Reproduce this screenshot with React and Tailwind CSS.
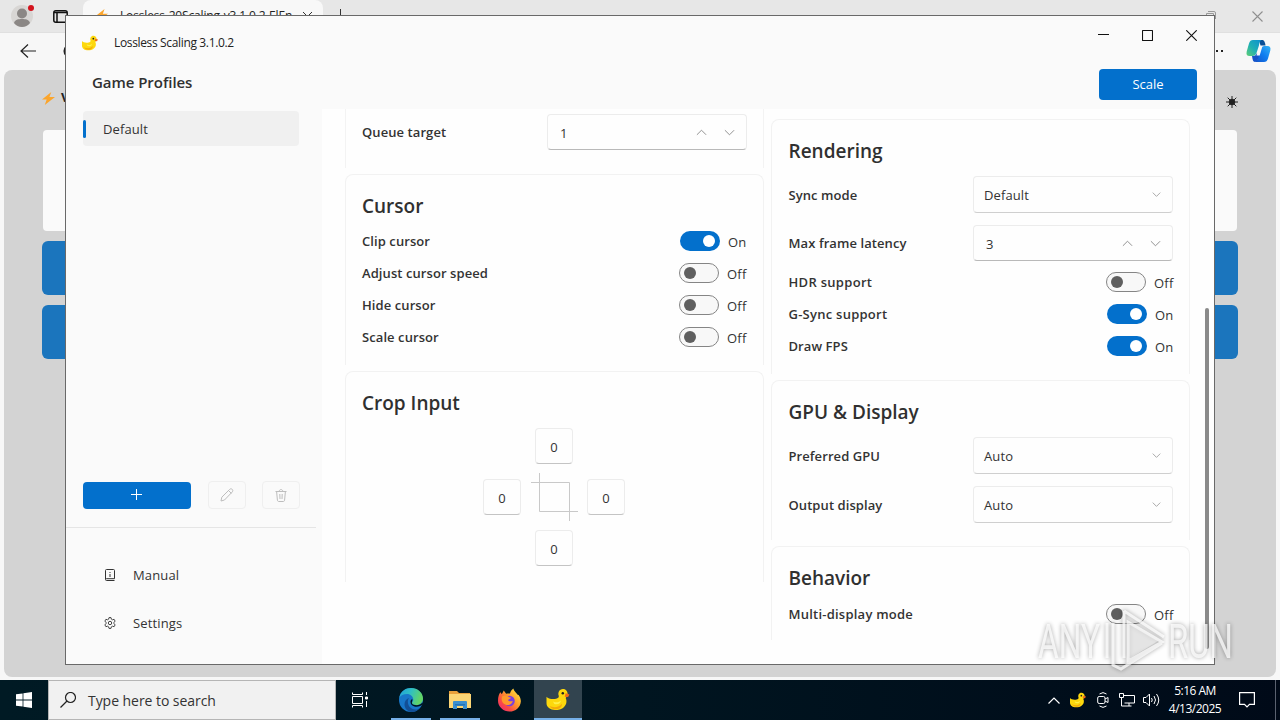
import { useState } from "react";

const Duck = ({ className }) => (
  <svg className={className} viewBox="0 0 24 24">
    <path fill="#fdd80d" d="M0 9c1.500 2 6 3.200 10 2.200 2-.4 3.200-1.200 2.800-3C11.500 5 13.500 1 17 1c3 0 5 2.200 5 5 0 2-1 3.200-2 4.400 1.500 2.600 1 7-1.500 9.100C16 22.600 12 23 9 23c-5 0-9-3-9-7z" />
    <path fill="#f5a90a" d="M3 18.500c4 2.500 10 2 13-2 .5 3-2 5.500-6 5.700-3 .1-6-1.200-7-3.700z" />
    <path fill="#fff04a" d="M7 14c3 1.500 6 1 8-1 0 2.500-2 4-4.500 4S7.500 16 7 14z" />
    <path fill="#f26a1b" d="M20 5.500l4 1.200-1.500 2.800-3.500-.5z" />
    <circle cx="17" cy="5.500" r="1.300" fill="#222" />
  </svg>
);

const Chevron = ({ up, className }) => (
  <svg className={className} viewBox="0 0 12 12" fill="none" stroke="currentColor">
    <path d={up ? "M1 8.500l5-5 5 5" : "M1 3.500l5 5 5-5"} />
  </svg>
);

const Card = ({ title, className, children }) => (
  <section className={`rounded-t-lg border-x border-t border-[#f2f2f2] px-4 pt-[15px] ${className}`}>
    <h2 className="h-8 text-[19px] font-semibold leading-8 text-[#303030]">{title}</h2>
    {children}
  </section>
);

const Label = ({ children, className = "tracking-[0.08px]" }) => (
  <span className={`text-[13px] font-semibold leading-5 text-[#333] ${className}`}>{children}</span>
);

const ToggleRow = ({ label, initial = false, labelClass }) => {
  const [on, setOn] = useState(initial);

  return (
    <div className="flex h-8 items-center justify-between">
      <Label className={labelClass}>{label}</Label>
      <button onClick={() => setOn(!on)} className={on ? "-mr-px flex items-center" : "flex items-center"}>
        <span
          className={`flex h-5 w-10 items-center rounded-full ${
            on ? "justify-end bg-[#0370cc] pr-[5px]" : "border border-[#858585] bg-[#f8f8f8] pl-[4px]"
          }`}
        >
          <span className={on ? "h-3 w-3 rounded-full bg-white" : "h-3 w-3 rounded-full bg-[#5f5f5f]"} />
        </span>
        <span className="ml-2 mt-px w-5 whitespace-nowrap text-left text-[13px] leading-5 tracking-[0.2px] text-[#333]">
          {on ? "On" : "Off"}
        </span>
      </button>
    </div>
  );
};

const SelectRow = ({ label, value }) => (
  <div className="flex h-[37px] items-center justify-between">
    <Label>{label}</Label>
    <button className="-mr-px ml-px flex h-[37px] w-[200px] items-center justify-between rounded border border-[#ececec] border-b-[#cfcfcf] bg-[#fefefe] pl-2.5 pr-[11px] text-[13px] tracking-[0.1px] text-[#333]">
      <span className="mt-0.5">{value}</span>
      <Chevron className="h-[9px] w-[9px] text-[#8d8d8d]" />
    </button>
  </div>
);

const NumberRow = ({ label, value, className = "" }) => (
  <div className="flex h-9 items-center justify-between">
    <Label>{label}</Label>
    <div
      className={`flex h-9 w-[200px] items-center rounded border border-[#ececec] border-b-[#b9b9b9] bg-[#fefefe] pl-3 pr-[11px] text-[13px] text-[#333] ${className}`}
    >
      <span className="mt-[3px] flex-1">{value}</span>
      <Chevron up className="h-[11px] w-[11px] text-[#888]" />
      <Chevron className="ml-[17px] h-[11px] w-[11px] text-[#888]" />
    </div>
  </div>
);

const CropBox = ({ className = "" }) => (
  <div
    className={`flex h-9 w-[38px] items-center justify-center rounded border border-[#ececec] border-b-[#c4c4c4] bg-[#fefefe] pt-[3px] text-[13px] text-[#333] ${className}`}
  >
    0
  </div>
);

const Bolt = ({ className }) => (
  <svg className={className} viewBox="0 0 14 14">
    <path fill="#fba52c" d="M10 0L0 8h5L3 14 14 5.500H8z" />
  </svg>
);

const Browser = () => (
  <div className="flex h-[680px] flex-col bg-[#f7f7f7]">
    <div className="flex h-8 shrink-0 bg-[#e7e7e7]">
      <div className="ml-[11px] mt-[5px] h-[22px] w-[22px]">
        <svg className="h-[26px] w-[26px] overflow-visible" viewBox="0 0 26 26">
          <circle cx="11" cy="11" r="11" fill="#d8d6d4" />
          <circle cx="11" cy="8.500" r="5" fill="#8b8785" />
          <path fill="#8b8785" d="M3 18c1-3.500 4-4 8-4s7 .5 8 4c-2 2.500-5 4-8 4s-6-1.500-8-4z" />
          <circle cx="20" cy="3" r="3" fill="#d3131d" />
        </svg>
      </div>
      <svg className="ml-5 mt-[10px] h-[13px] w-[15px]" viewBox="0 0 15 13" fill="none" stroke="#111" strokeWidth="1.500">
        <rect x=".8" y=".8" width="13.400" height="11.400" rx="2" />
        <path d="M1 2.500h13M4 3v9" strokeWidth="1.500" />
      </svg>
      <div className="ml-[15px] flex h-8 w-[240px] rounded-t-lg bg-[#f8f8f8] pl-[13px]">
        <Bolt className="mt-[9px] h-[12px] w-[12px]" />
        <span className="ml-[12px] mt-[7px] w-[175px] overflow-hidden whitespace-nowrap text-[12px] leading-[18px] tracking-[-0.15px] text-[#222]">
          Lossless-20Scaling-v3.1.0.2-ElEn
        </span>
        <svg className="ml-2 mt-3 h-[9px] w-[9px]" viewBox="0 0 9 9" stroke="#333">
          <path d="M0 0l9 9M9 0L0 9" />
        </svg>
      </div>
      <svg className="ml-[11px] mt-[9px] h-3 w-3" viewBox="0 0 12 12" stroke="#333">
        <path d="M6.500 0v12M0 6.500h12" />
      </svg>
      <div className="flex-1" />
      <svg className="mr-[36px] mt-[11px] h-[10px] w-[10px]" viewBox="0 0 10 10" fill="none" stroke="#999">
        <path d="M.5 2.500h7v7h-7zM2 .5h6q1.500 0 1.500 1.500v6" />
      </svg>
      <svg className="mr-[17px] mt-[11px] h-[11px] w-[11px]" viewBox="0 0 11 11" stroke="#8f8f8f" strokeWidth="1.100">
        <path d="M.5.5l10 10M10.500.5l-10 10" />
      </svg>
    </div>
    <div className="flex h-[38px] shrink-0 items-center border-t border-[#e0e0e0] pb-[2px] pl-5 pr-[9px]">
      <svg className="h-[14px] w-4" viewBox="0 0 16 14" fill="none" stroke="#222" strokeWidth="1.200">
        <path d="M8 .5L1 7l7 6.500M1 7h15" />
      </svg>
      <svg className="ml-[27px] h-[14px] w-[14px]" viewBox="0 0 14 14" fill="none" stroke="#222" strokeWidth="1.500">
        <circle cx="7" cy="7" r="5.800" />
      </svg>
      <div className="flex-1" />
      <span className="mr-[23px] flex gap-[3px]">
        <i className="h-0.5 w-0.5 bg-[#222]" />
        <i className="h-0.5 w-0.5 bg-[#222]" />
        <i className="h-0.5 w-0.5 bg-[#222]" />
      </span>
      <svg className="h-6 w-[25px]" viewBox="0 0 25 24">
        <defs>
          <linearGradient id="cpLeft" x1="1" y1="0" x2="0" y2="1">
            <stop offset="0" stopColor="#0d8fd0" />
            <stop offset=".55" stopColor="#1fb0b4" />
            <stop offset="1" stopColor="#5fce74" />
          </linearGradient>
          <linearGradient id="cpRight" x1="1" y1="0" x2="0" y2="1">
            <stop offset="0" stopColor="#35b4f5" />
            <stop offset=".5" stopColor="#0f7df0" />
            <stop offset="1" stopColor="#1553c9" />
          </linearGradient>
        </defs>
        <path fill="#0a4f96" d="M13 1h3c2 0 2.800 1.500 3.500 5.500h-5z" />
        <path fill="url(#cpLeft)" d="M7 1h8.500c-2 1-2 3-2.700 6L10.500 14c-.7 2-2 3-4 3H3.500C1 17 0 15.500.7 12.500L3 4.500C3.700 2 5 1 7 1z" />
        <path fill="url(#cpRight)" d="M18 23h-9c2-1 2.500-3 3.200-6L14.500 10c.7-2 2-3 4-3h3c2.500 0 3.500 1.500 2.800 4.500L22 19.500c-.7 2.500-2 3.500-4 3.500z" />
        <path fill="#1553c9" d="M6 17c3 0 4-.8 4.800-2.800L13 16c-.7 4-2 7-4 7-2 0-2.500-3-3-6z" />
        <path fill="#f7f7f7" d="M13.500 7h3l-2.800 9.500H10.500z" />
      </svg>
    </div>
    <div className="mx-1 flex h-[607px] flex-col rounded-lg bg-[#d3d3d3] px-[38px] pt-[21px]">
      <div className="flex h-[14px] items-center justify-between">
        <span className="flex items-center text-[13px] font-bold text-[#222]">
          <Bolt className="h-[13px] w-[13px]" />
          <span className="ml-[6px]">V</span>
        </span>
        <svg className="mt-[7px] h-3 w-3" viewBox="0 0 12 12" stroke="#222">
          <circle cx="6" cy="6" r="2.800" fill="#222" />
          <path d="M6 0v12M0 6h12M1.700 1.700l8.600 8.600M10.300 1.700l-8.600 8.600" />
        </svg>
      </div>
      <div className="mx-[1px] mt-[25px] h-[101px] rounded bg-[#fafafa]" />
      <div className="mt-[10px] h-[54px] rounded-md bg-[#1b75bd]" />
      <div className="mt-[10px] h-[54px] rounded-md bg-[#1b75bd]" />
    </div>
  </div>
);

const Sidebar = () => (
  <aside className="flex w-[256px] flex-col">
    <div className="ml-[17px] mt-0.5 flex h-[35px] w-[216px] items-center rounded bg-[#f0f0f0] text-[13px] tracking-[0.1px] text-[#333]">
      <span className="mr-[17px] h-[18px] w-[3px] rounded-full bg-[#0370cc]" />
      <span className="mt-0.5">Default</span>
    </div>
    <div className="mt-[335px] flex pl-[17px]">
      <button className="mt-px flex h-[27px] w-[108px] items-center justify-center rounded bg-[#0370cc] pb-0.5">
        <svg className="-ml-px h-[11px] w-[11px]" viewBox="0 0 11 11" stroke="white">
          <path d="M5.500 0v11M0 5.500h11" />
        </svg>
      </button>
      <button className="ml-[17px] flex h-[28px] w-[38px] items-center justify-center rounded border border-[#efefef]">
        <svg className="h-[14px] w-[14px]" viewBox="0 0 14 14" fill="none" stroke="#bdbdbd">
          <path d="M1 13l.8-3.800 7.700-7.700c1-1 2-.8 2.700-.2.700.7.900 1.800-.1 2.800L4.500 12zM8.500 2.500l2.900 2.900" />
        </svg>
      </button>
      <button className="ml-4 flex h-[28px] w-[38px] items-center justify-center rounded border border-[#efefef]">
        <svg className="h-[13px] w-[12px]" viewBox="0 0 12 13" fill="none" stroke="#bdbdbd">
          <path d="M.5 2.500h11M4.200 2.500c0-2.600 3.600-2.600 3.600 0M1.600 2.500l.8 8.500c.1 1 .5 1.500 1.500 1.500h4.200c1 0 1.400-.5 1.500-1.500l.8-8.500M4.800 5l.2 5M7.200 5L7 10" />
        </svg>
      </button>
    </div>
    <div className="mt-[18px] h-px w-[250px] bg-[#e5e5e5]" />
    <nav className="mt-[23px] flex flex-col text-[13px] tracking-[0.15px] text-[#333]">
      <a className="flex h-12 items-center pl-[39px]">
        <svg className="mr-[18px] h-3 w-[10px]" viewBox="0 0 10 12" fill="none" stroke="#333">
          <path d="M.5 10V1.500q0-1 1-1h7q1 0 1 1v8.200h-8q-1 0-1 .9t1 .9h8M5 5v3M5 3v1" />
        </svg>
        <span className="mt-0.5">Manual</span>
      </a>
      <a className="flex h-12 items-center pl-[38px]">
        <svg className="mr-[17px] h-3 w-3" viewBox="0 0 12 12" fill="none" stroke="#333" strokeWidth=".9">
          <path d="M5 .6h2l.4 1.600 1.100.6 1.600-.5 1 1.800L10 5.300v1.400l1.100 1.200-1 1.800-1.600-.5-1.100.6-.4 1.600H5l-.4-1.600-1.100-.6-1.600.5-1-1.800L2 6.700V5.300L.9 4.100l1-1.800 1.600.5 1.100-.6z" />
          <circle cx="6" cy="6" r="1.700" />
        </svg>
        <span className="mt-0.5">Settings</span>
      </a>
    </nav>
  </aside>
);

const SettingsPanel = () => (
  <main className="flex flex-1 bg-[#fefefe] pl-[23px]">
    <div className="w-[419px]">
      <section className="h-[59px] border-x border-[#f3f3f3] px-4 pt-[5px]">
        <NumberRow label="Queue target" value="1" />
      </section>
      <Card title="Cursor" className="mt-1.5 h-[191px]">
        <div className="mt-[3px]">
          <ToggleRow label="Clip cursor" initial />
          <ToggleRow label="Adjust cursor speed" />
          <ToggleRow label="Hide cursor" />
          <ToggleRow label="Scale cursor" />
        </div>
      </Card>
      <Card title="Crop Input" className="mt-1.5 h-[211px]">
        <div className="mr-px mt-[9px] grid grid-cols-[38px_38px_38px] place-content-center place-items-center gap-x-[14px] gap-y-[15px]">
          <CropBox className="col-start-2" />
          <CropBox className="col-start-1" />
          <svg className="h-9 w-[38px] overflow-visible" viewBox="0 0 38 36" fill="none" stroke="#c9c9c9">
            <path d="M4.500-6v38.500H43M-4 3.500h38.500V42" />
          </svg>
          <CropBox />
          <CropBox className="col-start-2" />
        </div>
      </Card>
    </div>
    <div className="ml-[7px] w-[419px]">
      <Card title="Rendering" className="mt-[10px] h-[255px] pl-[16.5px] pr-[15px]">
        <div className="mr-px mt-[9px] flex flex-col gap-3 pr-px">
          <SelectRow label="Sync mode" value="Default" />
          <NumberRow label="Max frame latency" value="3" className="-mr-px" />
        </div>
        <div className="mt-[5px]">
          <ToggleRow label="HDR support" labelClass="tracking-[0.3px]" />
          <ToggleRow label="G-Sync support" labelClass="tracking-[0.25px]" initial />
          <ToggleRow label="Draw FPS" initial />
        </div>
      </Card>
      <Card title="GPU & Display" className="mt-1.5 h-[160px] pl-[16.5px]">
        <div className="mt-[9px] flex flex-col gap-3 pr-px">
          <SelectRow label="Preferred GPU" value="Auto" />
          <SelectRow label="Output display" value="Auto" />
        </div>
      </Card>
      <Card title="Behavior" className="mt-1.5 h-[94px] pl-[16.5px] pr-[15px]">
        <div className="mt-1">
          <ToggleRow label="Multi-display mode" labelClass="tracking-[0.23px]" />
        </div>
      </Card>
    </div>
    <div className="ml-[15px] mt-[199px] h-[341px] w-1 rounded-full bg-[#8a8a8a]" />
  </main>
);

const AppWindow = () => (
  <div className="absolute left-[65px] top-[15px] flex h-[650px] w-[1150px] flex-col border border-[#696969] bg-[#fafafa]">
    <header className="flex h-[93px] justify-between">
      <div>
        <div className="mt-[17px] flex h-5 items-center pl-4">
          <Duck className="h-4 w-4" />
          <span className="ml-4 text-[12px] tracking-[-0.35px] text-[#222]">Lossless Scaling 3.1.0.2</span>
        </div>
        <h1 className="ml-[26px] mt-[17px] text-[15px] font-semibold leading-6 tracking-[-0.05px] text-[#303030]">
          Game Profiles
        </h1>
      </div>
      <div className="flex flex-col items-end pr-[17px]">
        <div className="mt-[14px] flex gap-[33px]">
          <svg className="h-[11px] w-[11px]" viewBox="0 0 11 11" stroke="#111">
            <path d="M0 4.500h11" />
          </svg>
          <svg className="h-[11px] w-[11px]" viewBox="0 0 11 11" fill="none" stroke="#111" strokeWidth="1.100">
            <rect x=".5" y=".5" width="10" height="10" rx=".5" />
          </svg>
          <svg className="h-[11px] w-[11px]" viewBox="0 0 11 11" stroke="#111" strokeWidth="1.100">
            <path d="M.3.3l10.400 10.400M10.700.3L.3 10.700" />
          </svg>
        </div>
        <button className="mt-7 h-[31px] w-[98px] rounded bg-[#0370cc] text-[13px] text-white">Scale</button>
      </div>
    </header>
    <div className="flex flex-1">
      <Sidebar />
      <SettingsPanel />
    </div>
  </div>
);

const Watermark = () => (
  <svg
    className="pointer-events-none absolute left-[1030px] top-[600px] h-[80px] w-[210px] drop-shadow-[0_0_2px_rgba(0,0,0,0.45)]"
    viewBox="0 0 210 80"
    fill="none"
  >
    <g fill="white" fillOpacity=".75" fontFamily="Roboto, sans-serif" fontSize="48">
      <text x="8" y="58" textLength="62" lengthAdjust="spacingAndGlyphs">ANY</text>
      <text x="138" y="58" textLength="65" lengthAdjust="spacingAndGlyphs">RUN</text>
    </g>
    <path fill="white" fillOpacity=".4" d="M99 24l29 17-29 18z" />
    <g stroke="white" strokeOpacity=".75" strokeWidth="3">
      <path d="M77 23v35M83 23v42l8 4 41-26M94 11v47M94 11l40 26M98 22l34 20-34 19z" />
    </g>
  </svg>
);

const Taskbar = () => (
  <footer className="flex h-10 bg-gradient-to-r from-[#001a24] via-[#001520] to-[#000a18]">
    <div className="flex w-12 items-center justify-center">
      <svg className="h-4 w-4" viewBox="0 0 16 16" fill="white">
        <path d="M0 2.300l6.600-.9v6.200H0zM7.400 1.300L16 0v7.600H7.400zM0 8.400h6.600v6.200L0 13.700zM7.400 8.400H16V16l-8.600-1.300z" />
      </svg>
    </div>
    <div className="flex w-[288px] items-center border border-[#b5b5b5] bg-[#f1f1f1] pl-[11px]">
      <svg className="h-4 w-4" viewBox="0 0 16 16" fill="none" stroke="#222" strokeWidth="1.200">
        <circle cx="10.500" cy="5.500" r="5" />
        <path d="M7 9L.5 15.500" />
      </svg>
      <span className="ml-[12px] text-[14px] tracking-[-0.05px] text-[#333]">Type here to search</span>
    </div>
    <div className="flex w-12 items-center justify-center">
      <svg className="h-4 w-[17px]" viewBox="0 0 17 16" fill="none" stroke="white">
        <path d="M.5.500v2h10v-2M.5 15.500v-2h10v2M.5 4.500h10v7H.5zM14.500 0v3M14.500 9v6" />
        <path fill="white" d="M13.500 5h2v2h-2z" />
      </svg>
    </div>
    <div className="ml-[7px] flex w-10 flex-col items-center">
      <svg className="mt-2 h-[24px] w-[24px]" viewBox="0 0 24 24">
        <defs>
          <linearGradient id="edgeTop" x1="0" y1="0" x2="1" y2=".3">
            <stop offset="0" stopColor="#1f9fdc" />
            <stop offset=".5" stopColor="#2fbfc4" />
            <stop offset="1" stopColor="#62d565" />
          </linearGradient>
        </defs>
        <circle cx="12" cy="12" r="12" fill="#1877c9" />
        <path fill="#124f96" d="M9 12c-1 5 2.500 9.500 7.500 9.500 2 0 3.300-.8 4.500-1.800-2 2.800-5 4.300-8.500 4.300C8 23.500 5.500 20 5.500 16.500 5.500 13.500 7 11 10 10z" />
        <path fill="url(#edgeTop)" d="M.2 10C1.500 3 6.500 0 12 0c7 0 12 5 12 10.500 0 4-3 6.500-6.500 6.500-3 0-4.500-1-4.500-2 0-.8 1.300-1.300 1.300-3.300C14.300 8.500 11.500 6 8 6 4.500 6 1.500 7.500.2 10z" />
        <path fill="#001520" d="M24 16c-2 2.200-5.500 3.200-8.500 2.500-2.500-.6-4-2.400-4-4.500 0-1.400.7-2.400 1.700-2.900.8 1.500-.7 2.500-.3 4.200.5 1.400 2.600 1.900 4.600 1.900 2.500 0 4.500-.7 5.800-2.700z" />
      </svg>
      <span className="mt-[6px] h-0.5 w-full bg-[#76b0e8]" />
    </div>
    <div className="ml-[9px] flex w-10 flex-col items-center">
      <svg className="mt-[10px] h-5 w-[22px]" viewBox="0 0 22 20">
        <path fill="#e9a13b" d="M0 1h8l2 2h11v5H0z" />
        <path fill="#fcd675" d="M0 4h22v14H0z" />
        <path fill="#3a8fd0" d="M4 19v-7q0-1 1-1h12q1 0 1 1v7h-4v-3H8v3z" />
        <path fill="#2374b8" d="M6 14h10v1.500H6z" />
      </svg>
      <span className="mt-2 h-0.5 w-full bg-[#76b0e8]" />
    </div>
    <div className="ml-[9px] flex w-10 justify-center">
      <svg className="mt-2 h-[24px] w-[23px]" viewBox="0 0 24 24">
        <defs>
          <linearGradient id="fox" x1="1" y1="0" x2="0" y2="1">
            <stop offset="0" stopColor="#fff14a" />
            <stop offset=".4" stopColor="#ffa12b" />
            <stop offset=".7" stopColor="#fb4a45" />
            <stop offset="1" stopColor="#e5257f" />
          </linearGradient>
        </defs>
        <path fill="url(#fox)" d="M2.500 4l1.500 2 2-4 2.500 3.500c1.500-.5 3-.5 4-.2C13 3 14.500 1 16 0c.5 3 3 4 4.500 6.500l1 .2c1.700 2.300 2.500 5 2.300 7C23.300 19.500 18.500 24 12 24S0 19 0 12.800C0 9 1 6 2.500 4z" />
        <circle cx="12" cy="13" r="5.500" fill="#7a3fe0" />
        <path fill="#ff9a2b" d="M4.500 8c3-1.500 5.500-.5 7 1 1 0 2 .3 2 .8-.5 1-2.500 1-3 2.200 0 1.500 3 1.500 5 1-1 3.500-4.500 5-7.500 4-4-1.500-5-6-3.500-9z" />
      </svg>
    </div>
    <div className="ml-[5px] flex w-12 flex-col items-center bg-[#32444f]">
      <Duck className="mt-2 h-[23px] w-6" />
      <span className="mt-[7px] h-0.5 w-full bg-[#76b0e8]" />
    </div>
    <div className="flex-1" />
    <div className="flex items-center text-white">
      <svg className="h-[7px] w-3" viewBox="0 0 12 7" fill="none" stroke="white" strokeWidth="1.200">
        <path d="M.5 6.500L6 1l5.500 5.500" />
      </svg>
      <Duck className="ml-[10px] h-4 w-4" />
      <svg className="ml-[11px] h-4 w-3" viewBox="0 0 12 16" fill="none" stroke="white">
        <path d="M2.500 2Q6-.8 9.500 2M2.500 14q3.500 2.800 7 0" />
        <rect x=".7" y="4.500" width="7.300" height="7" rx="1.500" />
        <path d="M8 7l3-1.500v5L8 9" />
      </svg>
      <svg className="ml-[10px] h-[14px] w-4" viewBox="0 0 16 14" fill="none" stroke="white">
        <path d="M5 2.500h10.500v7.500H5.500M.5.500h4v4h-4zM2.500 4.500v8.500h10M10 10v3" />
      </svg>
      <svg className="ml-[8px] h-[14px] w-[17px]" viewBox="0 0 17 14" fill="none" stroke="white">
        <path d="M.5 4.500h2.500l3.500-3.500v12L3 9.500H.5zM8.500 5q1.500 2 0 4M11 3q3 4 0 8M13.500 1q4.500 6 0 12" />
      </svg>
      <div className="ml-[7px] w-[56px] whitespace-nowrap text-center text-[12px] leading-[18px] tracking-[-0.5px]">
        <p>5:16 AM</p>
        <p>4/13/2025</p>
      </div>
      <svg className="ml-4 h-4 w-4" viewBox="0 0 16 16" fill="none" stroke="white" strokeWidth="1.200">
        <path d="M.6.600h14.800v11.800H10.500L8 15l-2.500-2.600H.6z" />
      </svg>
      <span className="ml-5 mr-1 h-10 w-px bg-[#5a6270]" />
    </div>
  </footer>
);

const App = () => (
  <div className="relative h-[720px] w-[1280px] overflow-hidden font-['Open_Sans','Noto_Sans',sans-serif]">
    <Browser />
    <Taskbar />
    <AppWindow />
    <Watermark />
  </div>
);

export default App;
